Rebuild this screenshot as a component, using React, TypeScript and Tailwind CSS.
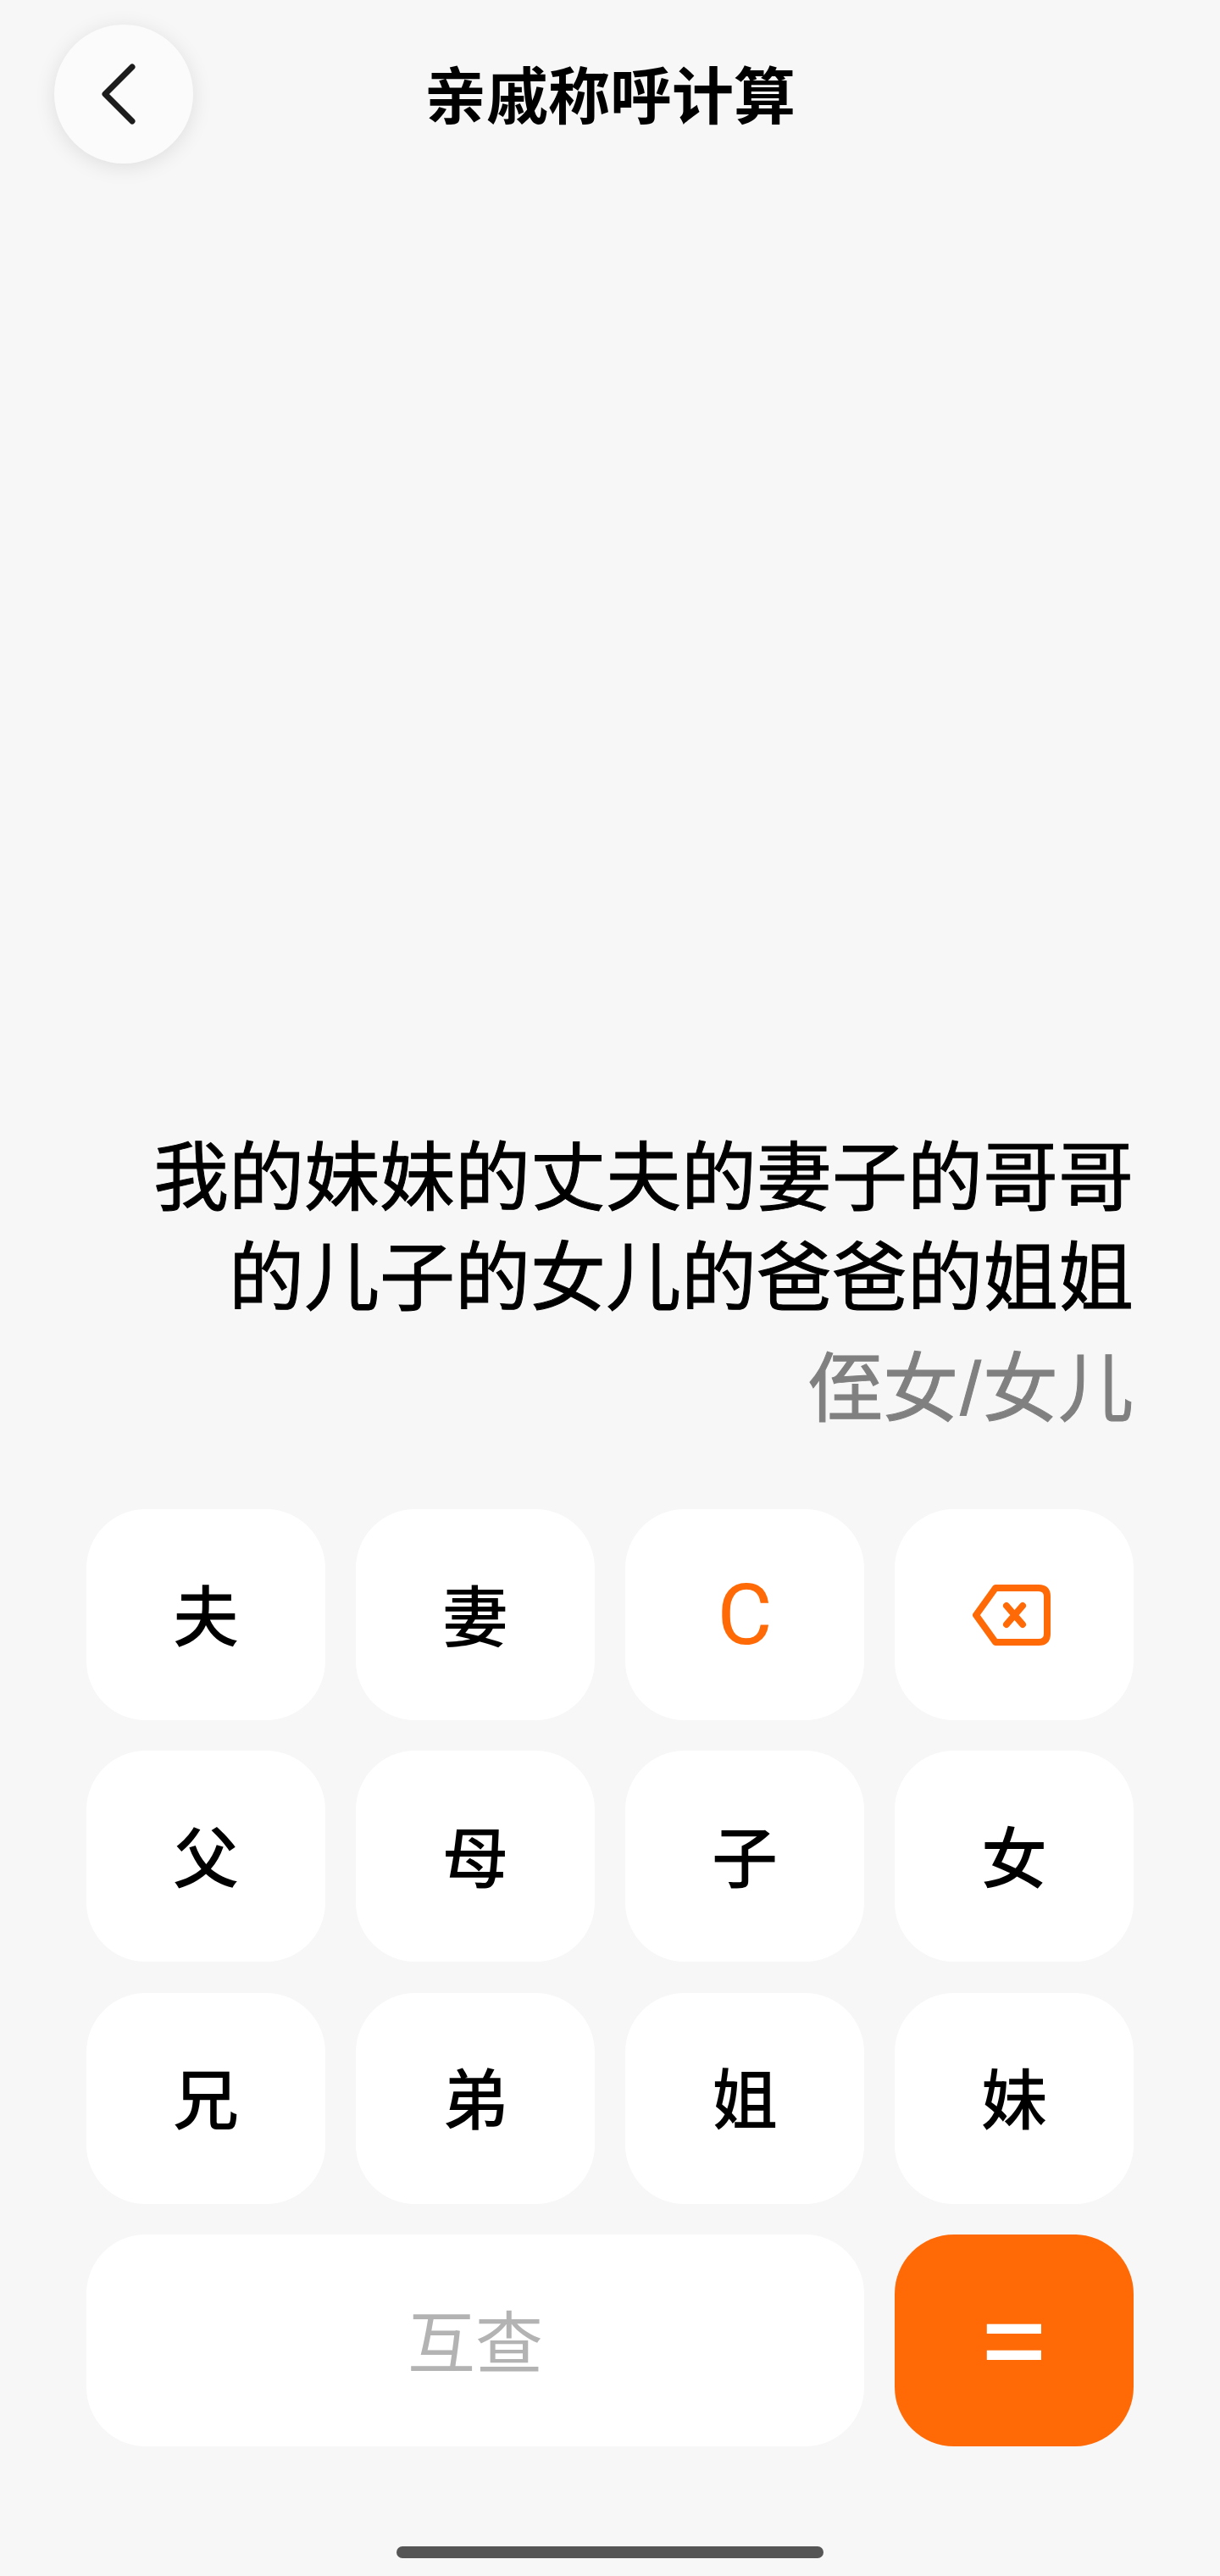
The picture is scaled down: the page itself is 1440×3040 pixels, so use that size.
const cjk = "font-['Noto_Sans_CJK_SC','Noto_Sans',sans-serif]";

const keys = ["夫", "妻", "C", "del", "父", "母", "子", "女", "兄", "弟", "姐", "妹"];

const BackspaceIcon = () => (
  <svg width="92" height="72" viewBox="0 0 92 72" fill="none" stroke="#ff6a06" strokeLinecap="round" strokeLinejoin="round" className="mr-[6px]">
    <path d="M27 4H78Q88 4 88 14V58Q88 68 78 68H27L4 36Z" strokeWidth="8" />
    <path d="M40 25L59 47M59 25L40 47" strokeWidth="8" />
  </svg>
);

const Key = ({ label }: { label: string }) => {
  if (label === "del") {
    return (
      <button className="h-[249px] rounded-[70px] bg-white flex items-center justify-center">
        <BackspaceIcon />
      </button>
    );
  }
  if (label === "C") {
    return (
      <button className="h-[249px] rounded-[70px] bg-white flex items-center justify-center text-[100px] leading-none font-['Roboto',sans-serif] text-[#ff6a06]">
        C
      </button>
    );
  }
  return (
    <button className="h-[249px] rounded-[70px] bg-white flex items-center justify-center pb-[6px] text-[78px] leading-none font-medium text-black">
      {label}
    </button>
  );
};

export default function App() {
  return (
    <div className={`w-[1440px] h-[3040px] bg-[#f7f7f7] flex flex-col ${cjk}`}>
      <div className="grid grid-cols-[164px_1fr_164px] items-center pt-[29px] pl-[64px] pr-[64px]">
        <button className="w-[164px] h-[164px] rounded-full bg-[#fbfbfc] shadow-[0_4px_24px_rgba(0,0,0,0.1)] flex items-center justify-center">
          <svg width="40" height="72" viewBox="0 0 40 72" fill="none" stroke="#1c1c1c" strokeWidth="7" strokeLinecap="round" strokeLinejoin="round" className="mr-[13px]">
            <path d="M36 4L4 36L36 68" />
          </svg>
        </button>
        <div className="text-center pb-[6px] text-[73px] leading-none font-semibold text-black">亲戚称呼计算</div>
        <div />
      </div>

      <div className="mt-auto pr-[102px] text-right text-[89px] leading-[118px] text-black [-webkit-text-stroke:1px]">
        <div>我的妹妹的丈夫的妻子的哥哥</div>
        <div>的儿子的女儿的爸爸的姐姐</div>
        <div className="mt-[13px] text-[#808080]">
          侄女<span className="px-[2px] leading-none font-['Liberation_Sans',sans-serif]">/</span>女儿
        </div>
      </div>

      <div className="mt-[90px] ml-[102px] mr-[102px] grid grid-cols-4 gap-x-[36px] gap-y-[36.33px]">
        {keys.map((k) => (
          <Key key={k} label={k} />
        ))}
        <button className="col-span-3 h-[250px] rounded-[70px] bg-white flex items-center justify-center pb-[6px] text-[80px] leading-none text-[#b3b3b3]">
          互查
        </button>
        <button className="h-[250px] rounded-[70px] bg-[#ff6a06] flex items-center justify-center text-[140px] leading-none text-white font-normal font-['Noto_Sans',sans-serif]">
          <span className="block scale-y-[1.12] pb-[6px]">=</span>
        </button>
      </div>

      <div className="mt-[118px] mb-[21px] mx-auto w-[504px] h-[14px] rounded-full bg-[#555555]" />
    </div>
  );
}
